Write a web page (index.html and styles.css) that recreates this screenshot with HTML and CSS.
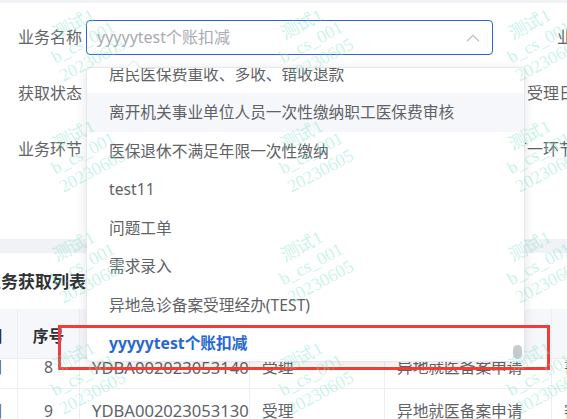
FILE: index.html
```html
<!DOCTYPE html>
<html lang="zh-CN">
<head>
<meta charset="utf-8">
<title>业务获取</title>
<link rel="stylesheet" href="styles.css">
</head>
<body>
<div class="page">
  <div class="topstrip"></div>
  <div class="filters">
    <div class="frow">
      <span class="flabel">业务名称</span>
      <div class="select">
        <div class="input is-focus">
          <span class="ph">yyyyytest个账扣减</span>
          <svg class="chev" width="14" height="8" viewBox="0 0 14 8"><path d="M1 7.2 L7 1.2 L13 7.2" fill="none" stroke="#c0c4cc" stroke-width="1.3"/></svg>
        </div>
        <div class="dropdown">
          <div class="dd-arrow"></div>
          <div class="dd-wrap">
            <ul class="dd-list">
              <li class="dd-item">居民医保费重收、多收、错收退款</li>
              <li class="dd-item hover">离开机关事业单位人员一次性缴纳职工医保费审核</li>
              <li class="dd-item">医保退休不满足年限一次性缴纳</li>
              <li class="dd-item">test11</li>
              <li class="dd-item">问题工单</li>
              <li class="dd-item">需求录入</li>
              <li class="dd-item">异地急诊备案受理经办(TEST)</li>
              <li class="dd-item selected">yyyyytest个账扣减</li>
            </ul>
          </div>
          <div class="dd-thumb"></div>
        </div>
      </div>
      <span class="rlabel r1">业务类型</span>
    </div>
    <div class="frow">
      <span class="flabel">获取状态</span>
      <div class="ctl"></div>
      <span class="rlabel r2">受理日期</span>
    </div>
    <div class="frow">
      <span class="flabel">业务环节</span>
      <div class="ctl"></div>
      <span class="rlabel r3">下一环节</span>
    </div>
  </div>
  <div class="band"></div>
  <section class="card">
    <h3 class="title">业务获取列表</h3>
    <div class="table">
      <div class="thead">
        <div class="cell c0">日</div>
        <div class="cell c1">序号</div>
        <div class="cell c2">业务编号</div>
        <div class="cell c3">业务环节</div>
        <div class="cell c4">业务名称</div>
        <div class="cell c5 hc5">状态</div>
      </div>
      <div class="trow partial">
        <div class="cell c0">日</div>
        <div class="cell c1">8</div>
        <div class="cell c2">YDBA002023053140012</div>
        <div class="cell c3">受理</div>
        <div class="cell c4">异地就医备案申请</div>
        <div class="cell c5">書</div>
      </div>
      <div class="trow">
        <div class="cell c0">日</div>
        <div class="cell c1">9</div>
        <div class="cell c2">YDBA002023053130015</div>
        <div class="cell c3">受理</div>
        <div class="cell c4">异地就医备案申请</div>
        <div class="cell c5">審</div>
      </div>
    </div>
  </section>
</div>

<div class="annot"></div>

<div class="wm">
  <div class="wm-grid">
    <div class="wm-cell"><div class="wm-text">测试1<br>b_cs_001<br>20230605</div></div>
    <div class="wm-cell"><div class="wm-text">测试1<br>b_cs_001<br>20230605</div></div>
    <div class="wm-cell"><div class="wm-text">测试1<br>b_cs_001<br>20230605</div></div>
    <div class="wm-cell"><div class="wm-text">测试1<br>b_cs_001<br>20230605</div></div>
    <div class="wm-cell"><div class="wm-text">测试1<br>b_cs_001<br>20230605</div></div>
    <div class="wm-cell"><div class="wm-text">测试1<br>b_cs_001<br>20230605</div></div>
    <div class="wm-cell"><div class="wm-text">测试1<br>b_cs_001<br>20230605</div></div>
    <div class="wm-cell"><div class="wm-text">测试1<br>b_cs_001<br>20230605</div></div>
    <div class="wm-cell"><div class="wm-text">测试1<br>b_cs_001<br>20230605</div></div>
    <div class="wm-cell"><div class="wm-text">测试1<br>b_cs_001<br>20230605</div></div>
    <div class="wm-cell"><div class="wm-text">测试1<br>b_cs_001<br>20230605</div></div>
    <div class="wm-cell"><div class="wm-text">测试1<br>b_cs_001<br>20230605</div></div>
    <div class="wm-cell"><div class="wm-text">测试1<br>b_cs_001<br>20230605</div></div>
    <div class="wm-cell"><div class="wm-text">测试1<br>b_cs_001<br>20230605</div></div>
    <div class="wm-cell"><div class="wm-text">测试1<br>b_cs_001<br>20230605</div></div>
    <div class="wm-cell"><div class="wm-text">测试1<br>b_cs_001<br>20230605</div></div>
    <div class="wm-cell"><div class="wm-text">测试1<br>b_cs_001<br>20230605</div></div>
    <div class="wm-cell"><div class="wm-text">测试1<br>b_cs_001<br>20230605</div></div>
    <div class="wm-cell"><div class="wm-text">测试1<br>b_cs_001<br>20230605</div></div>
    <div class="wm-cell"><div class="wm-text">测试1<br>b_cs_001<br>20230605</div></div>
  </div>
</div>
</body>
</html>
```

FILE: styles.css
```css
* { box-sizing: border-box; }
html, body {
  margin: 0;
  padding: 0;
  width: 567px;
  height: 419px;
  overflow: hidden;
  background: #fff;
  font-family: "Noto Sans", "Noto Sans CJK SC", sans-serif;
  color: #606266;
}
.page {
  display: flex;
  flex-direction: column;
  width: 567px;
}
.topstrip {
  height: 3px;
  background: #f0f2f5;
}
.filters {
  display: flex;
  flex-direction: column;
  gap: 21px;
  padding-top: 17px;
  padding-bottom: 72px;
  background: #fff;
}
.frow {
  display: flex;
  align-items: center;
  height: 35px;
  white-space: nowrap;
}
.flabel {
  width: 86px;
  flex: none;
  padding-left: 18px;
  font-size: 16px;
  line-height: 35px;
  color: #606266;
}
.select {
  position: relative;
  width: 407px;
  flex: none;
  height: 35px;
}
.ctl {
  width: 407px;
  flex: none;
  height: 35px;
}
.input {
  display: flex;
  align-items: center;
  height: 35px;
  border: 1px solid #2a6ad4;
  border-radius: 4px;
  padding-left: 10px;
  padding-right: 12px;
  background: #fff;
}
.ph {
  font-size: 16px;
  color: #a8abb2;
  line-height: 33px;
}
.chev {
  margin-left: auto;
  display: block;
}
.rlabel {
  font-size: 16px;
  color: #606266;
  line-height: 35px;
}
.r1 { margin-left: 64px; }
.r2 { margin-left: 34px; }
.r3 { margin-left: 18px; }

/* dropdown */
.dropdown {
  position: absolute;
  left: 0;
  top: 47px;
  width: 439px;
  height: 295px;
  background: #fff;
  border: 1px solid #e4e7ed;
  border-radius: 4px;
  box-shadow: 0 2px 12px rgba(0, 0, 0, 0.1);
  z-index: 10;
}
.dd-arrow {
  position: absolute;
  left: 42px;
  top: -6px;
  width: 9px;
  height: 9px;
  background: #fff;
  border-top: 1px solid #e4e7ed;
  border-left: 1px solid #e4e7ed;
  transform: rotate(45deg);
  z-index: 2;
}
.dd-wrap {
  height: 293px;
  overflow: hidden;
  position: relative;
}
.dd-list {
  list-style: none;
  margin: -13.5px 0 0 0;
  padding: 0;
}
.dd-item {
  height: 38.5px;
  line-height: 38.5px;
  padding-left: 22px;
  font-size: 15.7px;
  color: #606266;
  white-space: nowrap;
  overflow: hidden;
}
.dd-item.hover { background: #f5f7fa; }
.dd-item.selected {
  color: #2667d1;
  font-weight: 700;
}
.dd-thumb {
  position: absolute;
  right: 2px;
  top: 277px;
  width: 9px;
  height: 14px;
  border-radius: 5px;
  background: #c9cacd;
  z-index: 3;
}

/* band & card */
.band {
  height: 14px;
  background: #f0f2f5;
}
.card {
  background: #fff;
  display: flex;
  flex-direction: column;
}
.title {
  margin: 0 0 0 -16px;
  height: 56px;
  line-height: 58px;
  font-size: 17px;
  font-weight: 700;
  color: #303133;
  white-space: nowrap;
}
.table {
  display: flex;
  flex-direction: column;
  margin-left: -26px;
  width: 700px;
}
.thead, .trow {
  display: grid;
  grid-template-columns: 44px 62px 170px 135px 167px 122px;
  border-bottom: 1px solid #ebeef5;
}
.thead {
  height: 50px;
  background: #f5f7fa;
}
.trow { height: 44px; }
.trow.partial { height: 30px; }
.cell {
  display: flex;
  align-items: center;
  border-right: 1px solid #ebeef5;
  font-size: 15.7px;
  white-space: nowrap;
  overflow: hidden;
  padding-left: 12px;
  color: #606266;
}
.trow .c2 { font-size: 16.6px; }
.thead .cell {
  font-weight: 700;
  color: #303133;
  padding-top: 3px;
}
.thead .hc5 { padding-left: 40px; }
.trow.partial .cell {
  align-items: flex-start;
  line-height: 17px;
}
.c0, .c1 {
  justify-content: center;
  padding-left: 0;
}
.c0 { color: #303133; }
.trow .c0 { color: #606266; }

/* annotation */
.annot {
  position: absolute;
  left: 58px;
  top: 325px;
  width: 492px;
  height: 45px;
  border: 3px solid #f23b3b;
  z-index: 20;
}

/* watermark */
.wm {
  position: absolute;
  left: 0;
  top: 0;
  width: 567px;
  height: 419px;
  overflow: hidden;
  pointer-events: none;
  z-index: 30;
}
.wm-grid {
  display: grid;
  grid-template-columns: repeat(4, 228px);
  grid-auto-rows: 111px;
  margin-left: -31px;
  margin-top: -14px;
}
.wm-cell {
  display: flex;
  align-items: center;
  justify-content: center;
}
.wm-text {
  font-family: "Liberation Serif", serif;
  font-size: 18px;
  line-height: 20px;
  text-align: center;
  color: rgba(120, 225, 195, 0.4);
  transform: rotate(-28deg);
  white-space: nowrap;
}
```
